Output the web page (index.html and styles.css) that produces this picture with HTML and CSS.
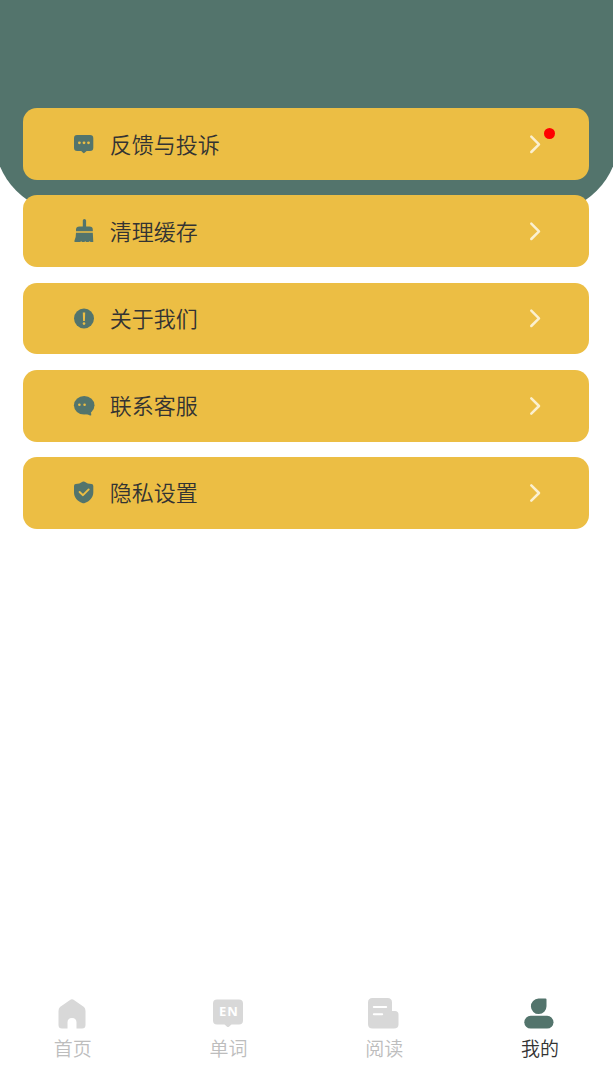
FILE: index.html
```html
<!DOCTYPE html>
<html lang="zh-CN">
<head>
<meta charset="utf-8">
<title>我的</title>
<link rel="stylesheet" href="styles.css">
</head>
<body>
<div class="page">
  <div class="hero"></div>
  <main class="menu">
    <a class="item">
      <svg class="icon" viewBox="0 0 24 24"><path class="fill" d="M5 3H18Q21.300 3 21.300 6.300V15.700Q21.300 19 18 19H14.600L12.600 20.800Q11.800 21.500 11 20.800L9.200 19H5.300Q2 19 2 15.700V6.300Q2 3 5 3Z"/><g class="gold"><circle cx="7.400" cy="10.800" r="1.400"/><circle cx="12" cy="10.800" r="1.400"/><circle cx="16.500" cy="10.800" r="1.400"/></g></svg>
      <span class="label">反馈与投诉</span>
      <span class="arrow"><svg viewBox="0 0 12 20"><path d="M2.300 2.700L10 10.300 2.300 18"/></svg><i class="dot"></i></span>
    </a>
    <a class="item">
      <svg class="icon" viewBox="0 0 24 24"><path class="fill" d="M10.800 1.500Q10.800 0 12.400 0T14.100 1.500V7.500H17.500Q20.800 7.500 20.800 10.500V12.300H4V10.500Q4 7.500 7.500 7.500H10.800ZM4 13.700H20.800L21.300 23H18.500L17.800 22.200 16.500 23H14.200L13.500 22.200 12.200 23H10L9.400 22.200 8 23H3.500Q1.700 23 2.500 21.500 4 19 4 13.700Z"/></svg>
      <span class="label">清理缓存</span>
      <span class="arrow"><svg viewBox="0 0 12 20"><path d="M2.300 2.700L10 10.300 2.300 18"/></svg></span>
    </a>
    <a class="item">
      <svg class="icon" viewBox="0 0 24 24"><circle class="fill" cx="12" cy="12.500" r="10"/><path class="gold" d="M10.800 6.500H13.200L12.900 15.100H11.100Z"/><circle class="gold" cx="12" cy="17.600" r="1.300"/></svg>
      <span class="label">关于我们</span>
      <span class="arrow"><svg viewBox="0 0 12 20"><path d="M2.300 2.700L10 10.300 2.300 18"/></svg></span>
    </a>
    <a class="item">
      <svg class="icon" viewBox="0 0 24 24"><ellipse class="fill" cx="12.200" cy="11.300" rx="10.300" ry="9.300"/><path class="fill" d="M13 20Q16 20 18 21.500 19.700 22 19.200 20L18.500 16Z"/><circle class="gold" cx="7.400" cy="10.700" r="1.300"/><circle class="gold" cx="12.600" cy="10.700" r="1.300"/></svg>
      <span class="label">联系客服</span>
      <span class="arrow"><svg viewBox="0 0 12 20"><path d="M2.300 2.300L10 10 2.300 17.600"/></svg></span>
    </a>
    <a class="item">
      <svg class="icon" viewBox="0 0 24 24"><path class="fill" d="M10.500 .8Q11.500 0 12.600 .8 15.500 3 19.500 3 21.300 3.200 21.300 5V11.500C21.300 16.500 17.500 20.500 12.800 22Q11.500 22.500 10.200 22C5.500 20.300 2 16.500 2 11.500V5Q2 3.200 3.700 3 7.600 3 10.500 .8Z"/><path class="check" d="M7.600 11L11 14.200 16.700 8.400"/></svg>
      <span class="label">隐私设置</span>
      <span class="arrow"><svg viewBox="0 0 12 20"><path d="M2.300 2.300L10 10 2.300 17.600"/></svg></span>
    </a>
  </main>
  <nav class="tabs">
    <a class="tab"><svg viewBox="0 0 32 32"><path d="M13.700 1.200Q16-.7 18.300 1.200L28 8Q29.500 9.500 29.500 12V26Q29.500 29.500 26 29.500H20.500V23.500Q20.500 19 16 19T11.500 23.500V29.500H6Q2.500 29.500 2.500 26V12Q2.500 9.500 4 8Z"/></svg><span>首页</span></a>
    <a class="tab"><svg viewBox="0 0 32 32"><path d="M5 .5H27Q31 .5 31 4.500V21.500Q31 25.500 27 25.500H19.500L17.200 27.500Q16 28.500 14.800 27.500L12.500 25.500H5Q1 25.500 1 21.500V4.500Q1 .5 5 .5Z"/><text x="7" y="17" class="en">EN</text></svg><span>单词</span></a>
    <a class="tab"><svg viewBox="0 0 32 32"><path d="M5.500-1H20.500Q25-1 25 3.500V12H28Q31.500 12 31.500 15.500V25.500Q31.500 29.500 27 29.500H5.500Q1 29.500 1 25V3.500Q1-1 5.500-1Z"/><path class="lines" d="M6.800 8H19.200M6.800 15.300H15.200"/></svg><span>阅读</span></a>
    <a class="tab active"><svg viewBox="0 0 32 32"><path d="M15.500-.5H22.500Q23.500-.5 23.500 .5V7.200A7.800 7.800 0 1 1 15.500-.5Z"/><rect x="1.300" y="16.800" width="29.200" height="12.800" rx="6.400"/></svg><span>我的</span></a>
  </nav>
</div>
</body>
</html>
```
FILE: styles.css
```css
* { box-sizing: border-box; }
body {
  margin: 0;
  background: #fff;
  font-family: "Noto Sans CJK SC DemiLight", "Noto Sans CJK SC", sans-serif;
  font-weight: 350;
  color: #333;
}
.page {
  position: relative;
  height: 1066px;
  overflow: hidden;
  display: flex;
  flex-direction: column;
}
/* Curved backdrop behind the first cards */
.hero {
  position: absolute;
  top: 0;
  left: -6px;
  right: -6px;
  height: 213px;
  border-radius: 0 0 76px 76px;
  background: #53746c;
}
.menu {
  position: relative;
  flex: 1;
  display: flex;
  flex-direction: column;
  gap: 15.400px;
  padding: 108.200px 24.300px 0 23.300px;
}
.item {
  height: 71.800px;
  flex: none;
  display: flex;
  align-items: center;
  padding: 0 48px 0 48.500px;
  border-radius: 14px;
  background: #ecbe44;
}
.icon { width: 24px; height: 24px; overflow: visible; }
.fill { fill: #53746c; }
.gold { fill: #ecbe44; }
.check { fill: none; stroke: #ecbe44; stroke-width: 1.900; stroke-linecap: round; stroke-linejoin: round; }
.label {
  flex: 1;
  margin-left: 14px;
  padding-bottom: 3px;
  font-size: 22px;
  line-height: 32px;
}
.arrow { position: relative; display: flex; }
.arrow svg {
  width: 12px;
  height: 20px;
  fill: none;
  stroke: #fbf0d0;
  stroke-width: 2.500;
  stroke-linecap: round;
  stroke-linejoin: round;
}
.dot {
  position: absolute;
  left: 15px;
  top: -6px;
  width: 11px;
  height: 11px;
  border-radius: 50%;
  background: #f00;
}
.tabs {
  display: flex;
  height: 75px;
  margin: 0 -5px;
}
.tab {
  flex: 1;
  display: flex;
  flex-direction: column;
  align-items: center;
  padding-top: 8px;
  font-size: 19px;
  line-height: 28px;
  color: #bdbdbd;
}
.tab svg { width: 32px; height: 32px; fill: #d8d8d8; overflow: visible; margin: 0 2px 3px 0; }
.tab .en { font: bold 13px "Noto Sans", sans-serif; letter-spacing: 1px; fill: #fff; }
.lines { fill: none; stroke: #fff; stroke-width: 2; stroke-linecap: round; }
.tab.active { color: #333; }
.active svg { fill: #53746c; }
```
